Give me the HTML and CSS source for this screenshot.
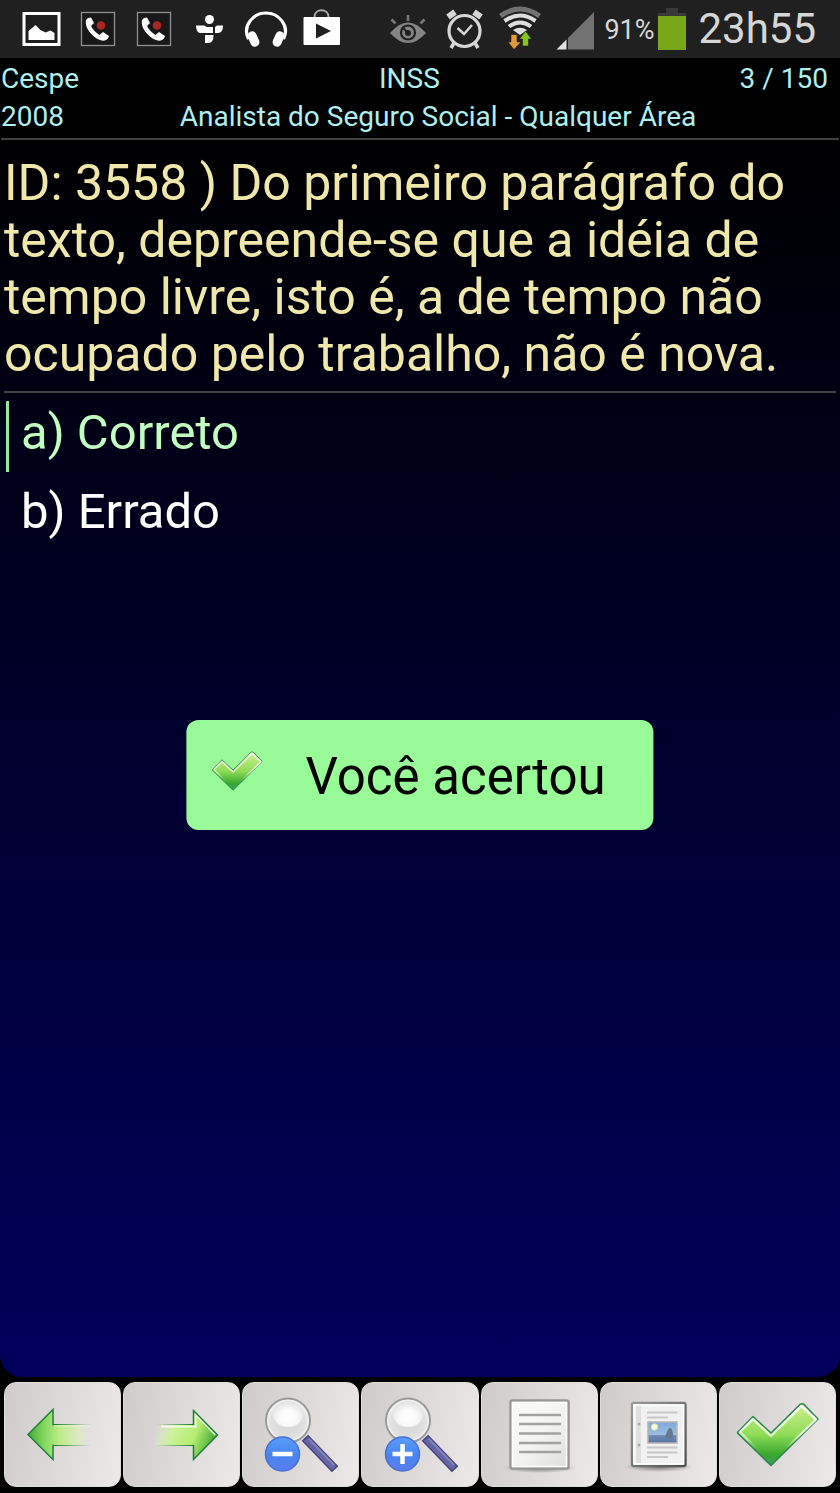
FILE: index.html
```
<!DOCTYPE html>
<html lang="pt-BR">
<head>
<meta charset="utf-8">
<meta name="viewport" content="width=device-width, initial-scale=1">
<title>INSS - Questão 3558</title>
<link rel="stylesheet" href="styles.css">
</head>
<body>
<svg class="defs" aria-hidden="true">
  <defs>
    <linearGradient id="green" x1="0" y1="0" x2="0" y2="1">
      <stop offset="0" stop-color="#d0f08c"/><stop offset=".5" stop-color="#8fdc58"/><stop offset=".82" stop-color="#3aa82c"/><stop offset="1" stop-color="#3c9c58"/>
    </linearGradient>
    <linearGradient id="edge" x1="0" y1="0" x2="0" y2="1">
      <stop offset="0" stop-color="#fff"/><stop offset=".5" stop-color="#fff" stop-opacity=".7"/><stop offset=".75" stop-color="#fff" stop-opacity="0"/>
    </linearGradient>
    <linearGradient id="arrow-left" gradientUnits="userSpaceOnUse" x1="23" y1="0" x2="88" y2="0">
      <stop offset="0" stop-color="#3fa838"/><stop offset=".25" stop-color="#7fd45c"/><stop offset=".5" stop-color="#bdec86"/><stop offset=".8" stop-color="#daeebd" stop-opacity=".8"/><stop offset="1" stop-color="#e2e0df" stop-opacity="0"/>
    </linearGradient>
    <linearGradient id="arrow-left-edge" gradientUnits="userSpaceOnUse" x1="50" y1="0" x2="87" y2="0">
      <stop offset="0" stop-color="#1b8038"/><stop offset="1" stop-color="#1b8038" stop-opacity="0"/>
    </linearGradient>
    <linearGradient id="arrow-right" gradientUnits="userSpaceOnUse" x1="33" y1="40" x2="92" y2="64">
      <stop offset="0" stop-color="#dcebcb" stop-opacity="0"/><stop offset=".3" stop-color="#cdf29c"/><stop offset=".65" stop-color="#b5ed70"/><stop offset="1" stop-color="#2fa52a"/>
    </linearGradient>
    <linearGradient id="arrow-right-edge" gradientUnits="userSpaceOnUse" x1="33" y1="0" x2="70" y2="0">
      <stop offset="0" stop-color="#1b8038" stop-opacity="0"/><stop offset="1" stop-color="#1b8038"/>
    </linearGradient>
    <radialGradient id="lens" cx=".5" cy=".6" r=".55">
      <stop offset="0" stop-color="#d6d6d6"/><stop offset=".75" stop-color="#e2e2e2"/><stop offset="1" stop-color="#efefef"/>
    </radialGradient>
    <radialGradient id="shine" cx=".5" cy=".65" r=".6">
      <stop offset="0" stop-color="#fff"/><stop offset=".5" stop-color="#fafafa"/><stop offset="1" stop-color="#e4e4e4"/>
    </radialGradient>
    <linearGradient id="blue" x1="0" y1="0" x2="0" y2="1">
      <stop offset="0" stop-color="#589dfb"/><stop offset=".55" stop-color="#4a84ee"/><stop offset="1" stop-color="#5c7df3"/>
    </linearGradient>
    <linearGradient id="sheet" x1="0" y1="0" x2="1" y2="1">
      <stop offset="0" stop-color="#fbfbfa"/><stop offset=".5" stop-color="#f4f4f2"/><stop offset="1" stop-color="#dededc"/>
    </linearGradient>
    <linearGradient id="frame" x1="0" y1="0" x2="1" y2="1">
      <stop offset="0" stop-color="#9a9a9a"/><stop offset="1" stop-color="#505252"/>
    </linearGradient>
    <linearGradient id="sky" x1="0" y1="0" x2="0" y2="1">
      <stop offset="0" stop-color="#7fa9dc"/><stop offset=".6" stop-color="#9dbbdf"/><stop offset=".65" stop-color="#6c8ab5"/><stop offset="1" stop-color="#5876a3"/>
    </linearGradient>
    <radialGradient id="shadow">
      <stop offset="0" stop-color="#333" stop-opacity=".6"/><stop offset="1" stop-color="#333" stop-opacity="0"/>
    </radialGradient>
    <symbol id="check" viewBox="17 19 84 67">
      <path d="M20 49 34 34.500 52 51 81 22.500Q83 21 85 22.500L99 37 52 83.500 18.500 51Q18.500 50 20 49Z" fill="url(#green)" stroke="#2a8751" stroke-width="1.600" stroke-linejoin="round"/>
      <path d="M21 50 34 37 52 54 82.500 24 97 37.500 52 81Z" fill="none" stroke="url(#edge)" stroke-width="2.400" stroke-linejoin="round"/>
    </symbol>
    <symbol id="magnifier" viewBox="0 0 117 105">
      <path d="m66 59 24 25" stroke="#45437c" stroke-width="9" stroke-linecap="square"/>
      <path d="m66 59 24 25" stroke="#6665a5" stroke-width="6" stroke-linecap="square"/>
      <path d="m67 57 25 26" stroke="#8483ba" stroke-width="2"/>
      <circle cx="46" cy="38.500" r="22" fill="url(#lens)" stroke="#989a9a" stroke-width="2"/>
      <circle cx="46" cy="38.500" r="20" fill="none" stroke="#f0f0f0" stroke-width="1.500"/>
      <ellipse cx="46" cy="32" rx="15" ry="13" fill="url(#shine)"/>
      <circle cx="40.500" cy="72" r="17" fill="url(#blue)" stroke="#4a70d6" stroke-width="1.500"/>
    </symbol>
    <symbol id="call" viewBox="0 0 56 58">
      <rect x="11.500" y="12.500" width="33" height="33" fill="#181818" stroke="#909090" stroke-width="1.300"/>
      <path d="M16 20c1.500-1.800 3-2.500 5-2.500l3 5.500-3 3c2 4 4.500 6.500 8.500 9l3.500-3 6 4c-.5 2.500-2.500 4.500-5.500 4.800C24.500 40 14 28.500 16 20Z" fill="#fff"/>
      <circle cx="31" cy="25.500" r="4.300" fill="#ad2523"/>
    </symbol>
  </defs>
</svg>

<header class="status-bar">
  <div class="status-group">
    <svg class="status-icon" viewBox="0 0 56 58" aria-hidden="true"><rect x="10" y="13.500" width="35" height="31" fill="#1e1e1e" stroke="#fff" stroke-width="3"/><path d="M14.500 40V31l7-6 5 5 5 2.500 5-2 4 2.500v7Z" fill="#fff"/></svg>
    <svg class="status-icon" aria-hidden="true"><use href="#call"/></svg>
    <svg class="status-icon" aria-hidden="true"><use href="#call"/></svg>
    <svg class="status-icon" viewBox="0 0 56 58" aria-hidden="true"><g fill="#fff"><circle cx="27.500" cy="19.500" r="4.500"/><path d="M14 25.500h8.500l2 1.500H31v6H18q-4-1-4-7.500ZM33 27l2-1.500h6q0 7.500-5 7.500h-3ZM23 35h8.500q0 8-5 8H23Z"/></g></svg>
    <svg class="status-icon" viewBox="0 0 56 58" aria-hidden="true"><path d="M10.500 39C4 26 15 13 28 13s24 13 17.500 26" fill="none" stroke="#fff" stroke-width="3.200"/><rect x="11" y="31" width="9" height="16" rx="4.500" fill="#fff" transform="rotate(-24 15.500 39)"/><rect x="36" y="31" width="9" height="16" rx="4.500" fill="#fff" transform="rotate(24 40.500 39)"/></svg>
    <svg class="status-icon" viewBox="0 0 56 58" aria-hidden="true"><path d="M20.500 17c0-9 14-9 14 0" fill="none" stroke="#aaa" stroke-width="2"/><rect x="9.500" y="17" width="36.500" height="28" rx="1" fill="#fff"/><path d="m22 23.500 15 7.500-15 7.500Z" fill="#202020"/></svg>
  </div>
  <div class="status-group">
    <svg class="status-icon" viewBox="0 0 56 58" aria-hidden="true"><path d="M10 33q18-21 36 0-18 20-36 0Z" fill="#848484"/><circle cx="28" cy="32.500" r="7" fill="none" stroke="#202020" stroke-width="2.200"/><circle cx="28" cy="33" r="3" fill="#202020"/><path d="m27 32-5-5" stroke="#202020" stroke-width="2"/><path d="M28 15v6M11.500 19.500l4 4M44.500 19.500l-4 4" stroke="#777" stroke-width="2.600"/></svg>
    <svg class="status-icon" viewBox="0 0 56 58" aria-hidden="true"><g fill="none" stroke="#d6d6d6"><circle cx="28.500" cy="31" r="15.500" stroke-width="3.200"/><path d="m12 17 7-5M45 17l-7-5" stroke-width="6"/><path d="m18 43-3 5M39 43l3 5" stroke-width="3.500"/><path d="m21.500 28 6.500 6 8-9" stroke-width="2.500"/></g></svg>
    <svg class="status-icon" viewBox="0 0 56 58" aria-hidden="true"><g fill="none"><path d="M8.500 16Q28 2 47.500 16" stroke="#727272" stroke-width="5"/><path d="M12.500 21Q28 10 43.500 21M17 26.500Q28 18.500 39 26.500" stroke="#dedede" stroke-width="4"/></g><path d="M21 30q7-4.500 14 0l-7 5Z" fill="#dedede"/><path d="M19 34.500h6v7.500h4L22 49.500 16 42h3Z" fill="#e39a3c" stroke="#202020" stroke-width=".6"/><path d="m33.500 31 6 8H36.500v7h-6v-7h-3Z" fill="#82c716" stroke="#202020" stroke-width=".6"/></svg>
    <svg class="status-icon" viewBox="0 0 56 58" aria-hidden="true"><path d="m8.500 49.500 10-10v10Z" fill="#e0e0e0"/><path d="M20 38 46 12v37.500H20Z" fill="#727272"/></svg>
    <span class="battery-level">91%</span>
    <svg class="battery" viewBox="0 0 28 58" aria-hidden="true"><path d="M8 8h12v5h8v4H0v-4h8Z" fill="#393939"/><path d="M0 16h28v34H0Z" fill="#78a81a"/></svg>
    <time class="clock" datetime="23:55">23h55</time>
  </div>
</header>

<main class="panel">
  <div class="exam">
    <div class="exam-row"><span>Cespe</span><span class="exam-center">INSS</span><span>3 / 150</span></div>
    <div class="exam-row exam-role"><span>2008</span><span class="exam-center">Analista do Seguro Social - Qualquer Área</span></div>
  </div>
  <h1 class="question" id="question">ID: 3558 ) Do primeiro parágrafo do texto, depreende-se que a idéia de tempo livre, isto é, a de tempo não ocupado pelo trabalho, não é nova.</h1>
  <div class="answers" role="radiogroup" aria-labelledby="question">
    <label class="answer"><input class="answer-mark" type="radio" name="answer" checked><span>a) Correto</span></label>
    <label class="answer"><input class="answer-mark" type="radio" name="answer"><span>b) Errado</span></label>
  </div>
</main>

<nav class="toolbar" aria-label="Ações">
  <button class="tool" type="button" aria-label="Anterior"><svg class="tool-icon" viewBox="0 0 117 105"><path d="M88 42.500H49V27.500L24 52.500l25 25V63.500h39Z" fill="url(#arrow-left)"/><path d="M50 44H86" stroke="#fff" stroke-opacity=".35" stroke-width="1.500"/><path d="M50 42.500H49V27.500L24 52.500l25 25V63.500h1" fill="none" stroke="#1b8038" stroke-width="1.500"/><path d="M50 42h37v1H50ZM50 63h37v1H50Z" fill="url(#arrow-left-edge)"/></svg></button>
  <button class="tool" type="button" aria-label="Próxima"><svg class="tool-icon" viewBox="0 0 117 105"><path d="M32 42.500h38.500V28.500l24 24.500-24 24.500V63.500H32Z" fill="url(#arrow-right)"/><path d="M38 44.500h34.500V32l20 21" fill="none" stroke="#fff" stroke-opacity=".75" stroke-width="2"/><path d="M69.500 42.500h1V28.500l24 24.500-24 24.500V63.500h-1" fill="none" stroke="#1b8038" stroke-width="1.500"/><path d="M33 42h37v1H33ZM33 63h37v1H33Z" fill="url(#arrow-right-edge)"/></svg></button>
  <button class="tool" type="button" aria-label="Diminuir texto"><svg class="tool-icon" viewBox="0 0 117 105"><use href="#magnifier"/><path d="M30.500 72h20" stroke="#fff" stroke-width="4.500"/></svg></button>
  <button class="tool" type="button" aria-label="Aumentar texto"><svg class="tool-icon" viewBox="0 0 117 105"><use href="#magnifier"/><path d="M30.500 72h20M40.500 62v20" stroke="#fff" stroke-width="4.500"/></svg></button>
  <button class="tool" type="button" aria-label="Texto"><svg class="tool-icon" viewBox="0 0 117 105"><ellipse cx="59" cy="86" rx="36" ry="5" fill="url(#shadow)"/><rect x="29.500" y="18.500" width="58" height="68" rx="2" fill="url(#sheet)" stroke="#969896" stroke-width="2.500"/><rect x="31.500" y="20.500" width="54" height="64" fill="none" stroke="#fff" stroke-width="1.500"/><path d="M38 33h42M38 42h42M38 51.500h42M38 61h42M38 70h42" stroke="#a2a2a2" stroke-width="2.500"/></svg></button>
  <button class="tool" type="button" aria-label="Imagem"><svg class="tool-icon" viewBox="0 0 117 105"><ellipse cx="59" cy="85" rx="34" ry="5" fill="url(#shadow)"/><rect x="32" y="21" width="53.500" height="63" rx="2" fill="#f1f1f1" stroke="url(#frame)" stroke-width="2.500"/><rect x="34" y="23" width="49.500" height="59" fill="none" stroke="#fff" stroke-width="1.500"/><path d="M36 24h5v57h-5Z" fill="#e0e0e0"/><circle cx="39" cy="42" r="1.500" fill="#aaa"/><circle cx="39" cy="63" r="1.500" fill="#aaa"/><path d="M47 30.500h30.500M47 35.500h21M47 65.500h30.500M47 70.500h30.500M47 75h21" stroke="#c8c8c8" stroke-width="2"/><rect x="48" y="40" width="29" height="21" fill="url(#sky)" stroke="#b4b4b4" stroke-width="1.500"/><circle cx="54.500" cy="45" r="3.200" fill="#fbfbd5" stroke="#d8e4a0"/><path d="M65 55q3-9 5-9 3 0 3 9l-2 2Z" fill="#64788f"/></svg></button>
  <button class="tool" type="button" aria-label="Responder"><svg class="tool-icon" viewBox="0 0 117 105"><use href="#check" x="17" y="19" width="84" height="67"/></svg></button>
</nav>

<div class="toast" role="status"><svg class="toast-icon" aria-hidden="true"><use href="#check"/></svg><span>Você acertou</span></div>
</body>
</html>
```
FILE: styles.css
```
* {
  box-sizing: border-box;
}

body {
  margin: 0;
  min-height: 100vh;
  display: flex;
  flex-direction: column;
  background: #000;
  color: #fff;
  font-family: Roboto, sans-serif;
}

.defs {
  position: absolute;
  width: 0;
  height: 0;
}

.status-bar {
  display: flex;
  justify-content: space-between;
  height: 58px;
  padding: 0 24px 0 14px;
  background: #202020;
  color: #d6d6d6;
}

.status-group {
  display: flex;
  align-items: center;
}

.status-icon {
  width: 56px;
  height: 58px;
  flex: none;
}

.battery-level {
  width: 54px;
  font-size: 27px;
  line-height: 32px;
  padding-top: 2px;
}

.battery {
  width: 28px;
  height: 58px;
  margin-right: 12px;
}

.clock {
  font-size: 42px;
  line-height: 58px;
}

.panel {
  flex: 1;
  border-radius: 0 0 22px 22px;
  background: linear-gradient(#000, #000 5%, #00005c);
}

.exam {
  margin: 0 1px;
  padding: 2px 0;
  border-bottom: 2px solid #424242;
  color: #afeeee;
  font-size: 28px;
  line-height: 38px;
}

.exam-row {
  display: flex;
  padding-right: 11px;
}

.exam-role {
  padding-right: 27px;
}

.exam-center {
  flex: 1;
  text-align: center;
}

.question {
  margin: 0 4px;
  padding: 15px 0 8px;
  border-bottom: 2px solid #424242;
  color: #f0e8aa;
  font-size: 50px;
  font-weight: 400;
  line-height: 57px;
}

.answers {
  display: grid;
  gap: 8px;
  padding: 8px 6px;
}

.answer {
  display: flex;
  gap: 12px;
  font-size: 49px;
  line-height: 57px;
}

.answer span {
  padding: 3px 0 11px;
}

.answer-mark {
  appearance: none;
  width: 3px;
  margin: 0;
}

.answer-mark:checked {
  background: #98e898;
}

.answer:has(:checked) {
  color: #c1ffc1;
}

.toolbar {
  display: flex;
  gap: 2px;
  padding: 5px 4px 6px;
}

.tool {
  flex: 1;
  min-width: 0;
  height: 105px;
  padding: 0;
  display: flex;
  justify-content: center;
  overflow: hidden;
  border: 1px solid #dedddc;
  border-radius: 12px;
  background: linear-gradient(100deg, #cecbca, #ece9e8);
}

.tool-icon {
  width: 117px;
  height: 105px;
  flex: none;
  margin-top: -1px;
}

.toast {
  position: absolute;
  top: 720px;
  left: 50%;
  transform: translateX(-50%);
  display: flex;
  align-items: center;
  gap: 42px;
  padding: 28px 48px 25px 25px;
  border-radius: 12px;
  background: #98fb98;
  color: #000;
  font-size: 51px;
  line-height: 57px;
  white-space: nowrap;
}

.toast-icon {
  width: 52px;
  height: 42px;
  margin-bottom: 12px;
}
```
